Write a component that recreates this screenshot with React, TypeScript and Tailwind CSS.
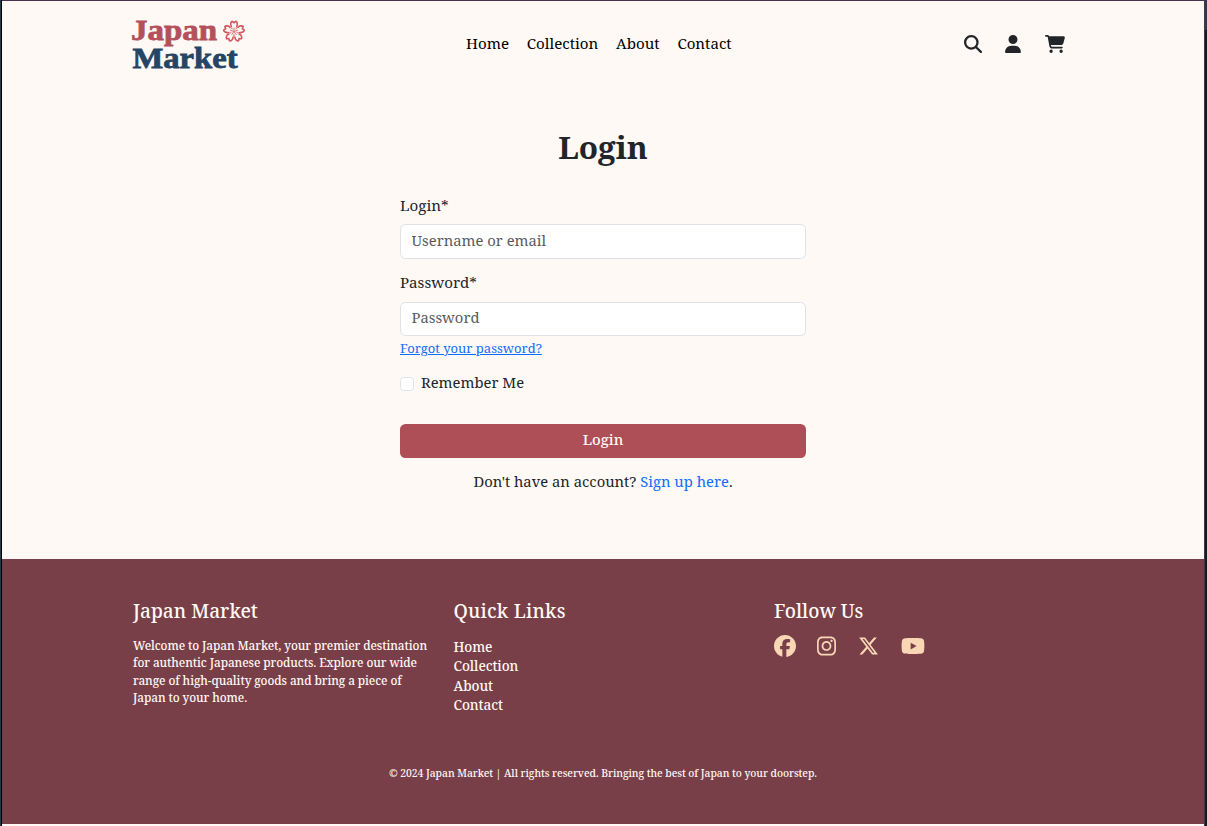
import {
  FaCartShopping,
  FaFacebook,
  FaInstagram,
  FaMagnifyingGlass,
  FaUser,
  FaXTwitter,
  FaYoutube,
} from "react-icons/fa6";

const links = ["Home", "Collection", "About", "Contact"];

function Blossom() {
  return (
    <g transform="translate(105 24.5)" fill="none" stroke="#d4565f" strokeLinecap="round">
      {[0, 72, 144, 216, 288].map((angle) => (
        <g key={angle} transform={`rotate(${angle})`}>
          <path
            d="M-2.7 -5.2C-4 -7.2 -3.2 -9.6 -1.8 -10.2L0 -8.8L1.8 -10.2C3.2 -9.6 4 -7.2 2.7 -5.2"
            strokeWidth="1.6"
          />
          <path d="M-2.7 -5.2L-1.7 -2.6M2.7 -5.2L1.7 -2.6" strokeWidth="0.5" />
          <path d="M0 -0.6V-3.6" strokeWidth="0.8" />
        </g>
      ))}
    </g>
  );
}

function Logo() {
  return (
    <svg
      className="block h-[76px] w-[118px] font-['Liberation_Serif',serif] text-[30px] font-bold"
      viewBox="0 0 118 76"
      aria-label="Japan Market"
    >
      <text x="2" y="33" textLength="86" lengthAdjust="spacingAndGlyphs" fill="#b4505a" stroke="#b4505a" strokeWidth="0.8">
        Japan
      </text>
      <text x="3.5" y="61.3" textLength="105" lengthAdjust="spacingAndGlyphs" fill="#264463" stroke="#264463" strokeWidth="0.8">
        Market
      </text>
      <Blossom />
    </svg>
  );
}

function Header() {
  return (
    <header className="flex h-[87px] items-center pl-[127px] pr-[139px] text-black">
      <Logo />
      <nav className="ml-[219px] -mt-[3px] flex gap-[17.8px] text-[15.1px] leading-[22px]">
        {links.map((link) => (
          <a key={link} href="#">
            {link}
          </a>
        ))}
      </nav>
      <div className="-mt-[1px] ml-auto flex items-center text-[18px] text-[#212529]">
        <FaMagnifyingGlass />
        <FaUser className="ml-[23px] h-[18px] w-[16px]" />
        <FaCartShopping className="ml-[24px] h-[18px] w-[20px]" />
      </div>
    </header>
  );
}

const inputClass =
  "block w-full rounded-[5.5px] border border-[#dee2e6] bg-white px-[10.5px] pb-[4px] text-[14.8px] placeholder:text-[#595c5f] placeholder:opacity-100 outline-none";

function LoginForm() {
  return (
    <main className="mx-auto flex h-[471px] w-[406px] flex-col text-[14.8px] leading-[22px]">
      <h1 className="mt-[39px] text-center text-[31.5px] font-bold leading-[40px]">Login</h1>
      <label className="mt-[27px] text-[15.2px]" htmlFor="login">
        Login*
      </label>
      <input id="login" className={inputClass + " mt-[8px] h-[35px]"} placeholder="Username or email" />
      <label className="mt-[12px] text-[15.1px]" htmlFor="password">
        Password*
      </label>
      <input
        id="password"
        type="password"
        className={inputClass + " mt-[9px] h-[34px]"}
        placeholder="Password"
      />
      <a href="#" className="mt-[2px] self-start text-[13px] leading-[20px] text-[#0d6efd] underline">
        Forgot your password?
      </a>
      <label className="mt-[13px] flex items-start">
        <input
          type="checkbox"
          className="mt-[6px] mr-[7px] h-[14px] w-[14px] appearance-none rounded-[3.6px] border border-[#dee2e6] bg-white"
        />
        Remember Me
      </label>
      <button className="mt-[31px] h-[34px] shrink-0 rounded-[5.5px] bg-[#ae4f57] pb-[4px] font-medium text-[#fffaf6]">
        Login
      </button>
      <p className="mt-[12px] text-center">
        Don't have an account?{" "}
        <a href="#" className="text-[#0d6efd]">
          Sign up here
        </a>
        .
      </p>
    </main>
  );
}

function Footer() {
  const heading = "text-[19.1px] leading-[26px]";
  return (
    <footer className="flex h-[265px] flex-col bg-[#793f49] pt-[39px] font-medium text-[#fff8f3]">
      <div className="flex pl-[131px]">
        <section className="w-[320.5px]">
          <h2 className={heading}>Japan Market</h2>
          <p className="mt-[13px] whitespace-nowrap text-[11.85px] leading-[17.3px] tracking-[-0.1px]">
            Welcome to Japan Market, your premier destination
            <br />
            for authentic Japanese products. Explore our wide
            <br />
            range of high-quality goods and bring a piece of
            <br />
            Japan to your home.
          </p>
        </section>
        <section className="w-[320.5px]">
          <h2 className={heading + " tracking-[0.2px]"}>Quick Links</h2>
          <ul className="mt-[13px] text-[13.6px] leading-[19.4px] tracking-[-0.1px]">
            {links.map((link) => (
              <li key={link}>
                <a href="#">{link}</a>
              </li>
            ))}
          </ul>
        </section>
        <section>
          <h2 className={heading}>Follow Us</h2>
          <div className="mt-[11px] flex items-center text-[#f9d7b5]">
            <FaFacebook className="h-[22px] w-[22px]" />
            <FaInstagram className="ml-[21px] h-[22px] w-[19px]" />
            <FaXTwitter className="ml-[22px] h-[22px] w-[21px]" />
            <FaYoutube className="ml-[22px] h-[22px] w-[24px]" />
          </div>
        </section>
      </div>
      <p className="mt-auto mb-[43px] text-center text-[10.38px] leading-[16px] tracking-[-0.07px]">
        © 2024 Japan Market | All rights reserved. Bringing the best of Japan to your doorstep.
      </p>
    </footer>
  );
}

export default function App() {
  return (
    <div className="flex h-[826px] w-[1207px] overflow-hidden bg-[#fff9f5] font-['Noto_Serif','DejaVu_Serif_Condensed',serif] text-[#212529]">
      <div className="w-[2px] shrink-0 border-l border-[#263b49] bg-black" />
      <div className="h-full w-[1202px] border-t border-[#46334d]">
        <Header />
        <LoginForm />
        <Footer />
      </div>
      <div className="flex w-[3px] shrink-0 flex-col border-l border-[#41384f] bg-[#1b191e]">
        <div className="h-[30px] bg-[#3d3349]" />
      </div>
    </div>
  );
}
